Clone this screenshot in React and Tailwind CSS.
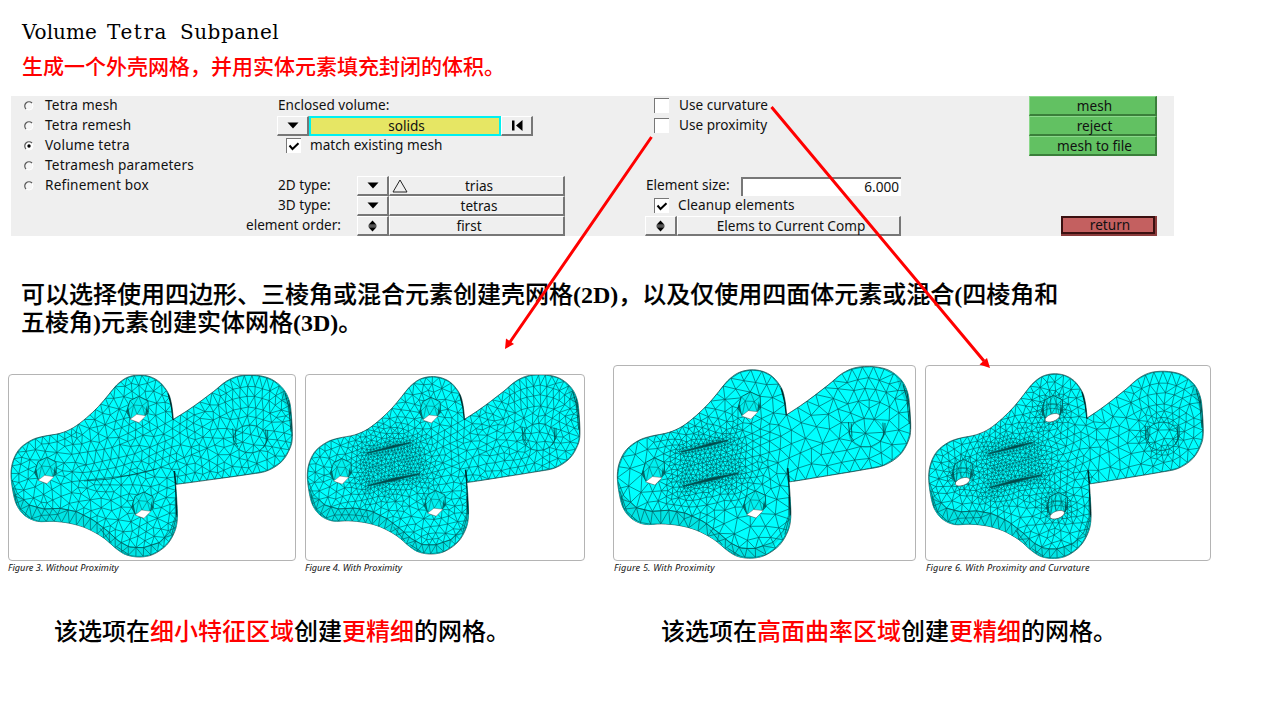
import React from "react";

/* ---------- mesh generation ---------- */

const OUTLINE = [
  [520,163],[515,120],[505,85],[480,52],[450,35],[415,30],[380,38],[350,60],[325,90],[295,125],[260,158],[220,188],[180,205],
  [130,214],[95,225],[60,250],[40,285],[33,325],[38,375],[50,420],[75,452],[112,469],[160,469],[210,475],[260,490],[310,518],
  [350,552],[380,570],[420,576],[460,568],[500,540],[524,500],[532,460],[530,400],[527,358],[560,354],[640,343],[740,329],
  [800,318],[845,290],[870,250],[877,215],[874,150],[868,108],[850,72],[815,43],[770,31],[720,32],[680,48],[640,80],[600,110],[560,138],
];
const EDGE = [[36,345],[52,385],[88,420],[130,432],[180,430],[230,440],[280,465],[325,500],[355,528],[390,547],[430,548],[480,532],[510,500],[526,455],[526,400]];
const CAPS = [
  [[655,72],[662,95],[700,72],[755,62],[810,78],[850,110],[873,155]],
  [[655,120],[705,100],[755,92],[805,105],[848,138],[874,180]],
  [[640,165],[700,135],[750,125],[800,138],[850,172],[872,205]],
];
const RIDGES = [
  [[215,268],[330,250],[420,215],[520,163]],
  [[235,305],[400,268],[520,218],[600,160],[655,85]],
  [[215,350],[400,330],[470,312],[560,275],[650,238]],
];
const SLOTS = [[[218,261],[352,233]],[[222,361],[375,329]]];
const HOLES = [[413,160],[137,343],[428,447]];
const HEX = [[-33,-20],[-23,-53],[3,-66],[31,-52],[32,-18],[22,-8],[2,11],[-21,2]];

const dist = (a, b) => Math.hypot(a[0] - b[0], a[1] - b[1]);
function inside(p, poly) {
  let c = false;
  for (let i = 0, j = poly.length - 1; i < poly.length; j = i++) {
    const [xi, yi] = poly[i], [xj, yj] = poly[j];
    if (yi > p[1] !== yj > p[1] && p[0] < ((xj - xi) * (p[1] - yi)) / (yj - yi) + xi) c = !c;
  }
  return c;
}
function segDist(p, a, b) {
  const dx = b[0] - a[0], dy = b[1] - a[1];
  const t = Math.max(0, Math.min(1, ((p[0] - a[0]) * dx + (p[1] - a[1]) * dy) / (dx * dx + dy * dy)));
  return Math.hypot(p[0] - a[0] - t * dx, p[1] - a[1] - t * dy);
}
function sample(line, h, closed) {
  const out = [];
  const pts = closed ? [...line, line[0]] : line;
  let acc = 0;
  out.push(pts[0]);
  for (let i = 1; i < pts.length; i++) {
    const a = pts[i - 1], b = pts[i], L = dist(a, b);
    for (let s = 0; s < L; s += 1) {
      acc += 1;
      const p = [a[0] + ((b[0] - a[0]) * s) / L, a[1] + ((b[1] - a[1]) * s) / L];
      if (acc >= h(p)) { out.push(p); acc = 0; }
    }
  }
  return out;
}
function delaunay(pts) {
  const n = pts.length;
  const P = [...pts, [-5000, -5000], [6000, -5000], [450, 8000]];
  const circ = (a, b, c) => {
    const [ax, ay] = P[a], [bx, by] = P[b], [cx, cy] = P[c];
    const d = 2 * (ax * (by - cy) + bx * (cy - ay) + cx * (ay - by)) || 1e-9;
    const A = ax * ax + ay * ay, B = bx * bx + by * by, C = cx * cx + cy * cy;
    const x = (A * (by - cy) + B * (cy - ay) + C * (ay - by)) / d;
    const y = (A * (cx - bx) + B * (ax - cx) + C * (bx - ax)) / d;
    return { a, b, c, x, y, r: (ax - x) ** 2 + (ay - y) ** 2 };
  };
  const order = pts.map((_, i) => i).sort((i, j) => pts[i][0] - pts[j][0]);
  let open = [circ(n, n + 1, n + 2)];
  const done = [];
  for (const i of order) {
    const [x, y] = P[i];
    const edges = new Map();
    const keep = [];
    for (const t of open) {
      const dx = x - t.x;
      if (dx > 0 && dx * dx > t.r) { done.push(t); continue; }
      if (dx * dx + (y - t.y) ** 2 < t.r) {
        for (const [u, v] of [[t.a, t.b], [t.b, t.c], [t.c, t.a]]) {
          const k = Math.min(u, v) * 10000 + Math.max(u, v);
          if (edges.has(k)) edges.set(k, null); else edges.set(k, [u, v]);
        }
      } else keep.push(t);
    }
    for (const e of edges.values()) if (e) keep.push(circ(e[0], e[1], i));
    open = keep;
  }
  return [...done, ...open].filter((t) => t.a < n && t.b < n && t.c < n);
}
function buildMesh({ size, armSize, fine, fineHoles, seed }) {
  let s = seed;
  const rnd = () => ((s = (s * 16807) % 2147483647) / 2147483647);
  const zone = [[225, 258], [350, 232], [372, 330], [228, 358]];
  const h = (p) => {
    let v = p[0] > 540 ? armSize : size;
    if (fine) {
      const ds = Math.min(...SLOTS.map((q) => segDist(p, q[0], q[1])));
      let dz = 0;
      if (!inside(p, zone)) dz = Math.min(...zone.map((a, i) => segDist(p, a, zone[(i + 1) % 4])));
      v = Math.min(v, fine + Math.max(0, dz - 12) * 0.17, 6 + ds * 0.3);
    }
    if (fineHoles) {
      for (const c of HOLES) v = Math.min(v, 9 + Math.max(0, dist(p, [c[0], c[1] - 25]) - 32) * 0.35);
      v = Math.min(v, 14 + Math.abs(dist(p, [750, 218]) - 50) * 0.3);
    }
    return v;
  };
  const holes = HOLES.map(([x, y]) => HEX.map(([a, b]) => [x + a, y + b]));
  const pts = [];
  const cell = 40, grid = new Map();
  const put = (p, k) => {
    const r = h(p) * k, gx = Math.floor(p[0] / cell), gy = Math.floor(p[1] / cell);
    for (let i = -1; i <= 1; i++) for (let j = -1; j <= 1; j++)
      for (const q of grid.get((gx + i) * 1000 + gy + j) || []) if (dist(p, q) < r) return;
    const key = gx * 1000 + gy;
    if (!grid.has(key)) grid.set(key, []);
    grid.get(key).push(p);
    pts.push(p);
  };
  sample(OUTLINE, (p) => h(p) * 0.9, true).forEach((p) => put(p, 0.6));
  holes.forEach((o) => sample(o, () => (fineHoles ? 9 : size * 0.9), true).forEach((p) => put(p, 0.45)));
  const thin = (p) => Math.min(h(p), 24);
  sample(EDGE, thin, false).forEach((p) => put(p, 0.6));
  CAPS.forEach((l) => sample(l, (p) => h(p) * 0.9, false).forEach((p) => put(p, 0.7)));
  const ring = Array.from({ length: 28 }, (_, i) => [750 + 51 * Math.cos(i * 0.2244), 222 + 42 * Math.sin(i * 0.2244)]);
  sample(ring, (p) => h(p) * 0.9, true).forEach((p) => put(p, 0.65));
  RIDGES.forEach((l) => sample(l, h, false).forEach((p) => put(p, 0.8)));
  if (fine) SLOTS.forEach((l) => sample(l, () => 6, false).forEach((p) => put(p, 0.6)));
  const fixed = pts.length;
  for (let i = 0; i < 70000; i++) {
    const p = [30 + rnd() * 850, 28 + rnd() * 550];
    if (!inside(p, OUTLINE) || holes.some((o) => inside(p, o))) continue;
    put(p, 0.83);
  }
  let tris = delaunay(pts);
  for (let it = 0; it < 6; it++) {
    const acc = pts.map(() => [0, 0, 0]);
    for (const t of tris) for (const [u, v] of [[t.a, t.b], [t.b, t.c], [t.c, t.a]]) {
      acc[u][0] += pts[v][0]; acc[u][1] += pts[v][1]; acc[u][2]++;
      acc[v][0] += pts[u][0]; acc[v][1] += pts[u][1]; acc[v][2]++;
    }
    for (let i = fixed; i < pts.length; i++) if (acc[i][2]) pts[i] = [acc[i][0] / acc[i][2], acc[i][1] / acc[i][2]];
    tris = delaunay(pts);
  }
  const seen = new Set();
  let d = "";
  for (const t of tris) {
    const c = [(pts[t.a][0] + pts[t.b][0] + pts[t.c][0]) / 3, (pts[t.a][1] + pts[t.b][1] + pts[t.c][1]) / 3];
    if (!inside(c, OUTLINE) || holes.some((o) => inside(c, o))) continue;
    for (const [u, v] of [[t.a, t.b], [t.b, t.c], [t.c, t.a]]) {
      const k = Math.min(u, v) * 10000 + Math.max(u, v);
      if (seen.has(k)) continue;
      seen.add(k);
      d += `M${pts[u][0].toFixed(1)} ${pts[u][1].toFixed(1)}L${pts[v][0].toFixed(1)} ${pts[v][1].toFixed(1)}`;
    }
  }
  return d;
}

const line = (pts) => "M" + pts.map((p) => p.join(" ")).join("L");
const SHARP = [0, 34];
function smooth(pts) {
  const n = pts.length;
  let d = `M${pts[0].join(" ")}`;
  for (let i = 0; i < n; i++) {
    const a = pts[(i - 1 + n) % n], b = pts[i], c = pts[(i + 1) % n], e = pts[(i + 2) % n];
    const c1 = SHARP.includes(i) ? b : [b[0] + (c[0] - a[0]) / 6, b[1] + (c[1] - a[1]) / 6];
    const c2 = SHARP.includes((i + 1) % n) ? c : [c[0] - (e[0] - b[0]) / 6, c[1] - (e[1] - b[1]) / 6];
    d += `C${c1.join(" ")} ${c2.join(" ")} ${c.join(" ")}`;
  }
  return d + "Z";
}
const OUT_D = smooth(OUTLINE);

function Hole({ x, y, round }) {
  return (
    <g transform={`translate(${x} ${y})`} strokeLinejoin="round">
      <path d="M-33-20L-23-53L3-66L31-52L32-18L22-8L2 11L-21 2Z" fill="#00f0f0" stroke="#004a4a" strokeWidth="2.2" />
      <path d="M-33-20L-12-40L3-66M-23-53L-12-40L14-38L31-52M3-66L14-38L32-18M-12-40L-21 2M-12-40L-2-12L14-38L22-8" fill="none" stroke="#005a5a" strokeWidth="1.5" />
      <path d="M-33-22L-21 2L-28-32ZM32-20L22-8L27-38Z" fill="#004a4a" opacity="0.8" />
      {round ? (
        <>
          <path d="M-30-6L-25-48M-20 0L-16-56M-5-12L-5-62M12-13L12-60M25-8L26-50M-30-34Q0-50 30-34M-30-20Q0-36 30-20" fill="none" stroke="#004a4a" strokeWidth="1.5" />
          <ellipse cx="0" cy="0" rx="23" ry="11" transform="rotate(-17)" fill="#fff" stroke="#333" strokeWidth="1.5" />
        </>
      ) : (
        <path d="M-23 3L-3-12L25-8L4 13Z" fill="#fff" stroke="#444" strokeWidth="1.2" />
      )}
    </g>
  );
}

function Bracket({ id, viewBox, matrix, options }) {
  const d = React.useMemo(() => buildMesh(options), [options]);
  return (
    <svg viewBox={viewBox} className="block h-full w-full" preserveAspectRatio="none">
      <clipPath id={id}><path d={OUT_D} /></clipPath>
      <g transform={matrix}>
        <path d={OUT_D} fill="#00ffff" stroke="#3c5a5a" strokeWidth="2.5" strokeLinejoin="round" />
        <g clipPath={`url(#${id})`} fill="none">
          <path d="M33 335L52 385L88 420L130 432L180 430L230 440L280 465L325 500L355 528L390 547L430 548L480 532L510 500L527 455L527 350L545 480L430 590L330 560L250 500L100 480L30 430Z" fill="#00e4e4" />
          <path d="M850 110L873 155L885 190L885 60L830 50Z" fill="#00d8d8" />
          <path d={d} stroke="#00585c" strokeWidth="1.9" />
          <path d={line(EDGE)} stroke="#005c5c" strokeWidth="2" />
          <ellipse cx="750" cy="222" rx="51" ry="42" stroke="#006a6a" strokeWidth="1.2" />
          <path d="M698 190L701 225L714 246M706 194L708 232M803 195L803 225L790 248M797 194L799 232" stroke="#005252" strokeWidth="2.5" />
          <path d="M505 85L515 125L520 165M523 318L527 358L531 455" stroke="#002c2c" strokeWidth="5" />
          <path d="M855 85L866 125L873 200M866 105L873 155L877 215" stroke="#004040" strokeWidth="2.5" />
          <path d="M40 370L60 430L90 458M44 385L50 420M350 545L385 568M300 490L335 535M515 510L530 450" stroke="#006a6a" strokeWidth="2.5" />
          {options.fine ? (
            <path d="M218 262L300 246L352 232L300 240ZM222 362L300 348L382 328L300 341Z" fill="#004848" stroke="#005454" strokeWidth="2.5" />
          ) : (
            <path d="M252 348L330 342L400 328L470 312" stroke="#003c3c" strokeWidth="2" />
          )}
        </g>
        {HOLES.map(([x, y]) => <Hole key={x} x={x} y={y} round={options.fineHoles} />)}
      </g>
    </svg>
  );
}

const FIGURES = [
  { id: "f3", caption: "Figure 3. Without Proximity", offset: "", box: "w-[288px] h-[187px]", cap: "tracking-[0px]", viewBox: "27 30 858 555", matrix: "matrix(1 0 0 1 0 0)", options: { size: 25, armSize: 25, seed: 11 } },
  { id: "f4", caption: "Figure 4. With Proximity", offset: "ml-[9px]", box: "w-[280px] h-[187px]", cap: "tracking-[0px]", viewBox: "18 30 834 555", matrix: "matrix(0.969 -0.018 0 0.975 -10 13)", options: { size: 23, armSize: 23, fine: 10, seed: 23 } },
  { id: "f5", caption: "Figure 5. With Proximity", offset: "ml-[28px]", box: "w-[303px] h-[196px]", cap: "pl-px tracking-[0.15px]", viewBox: "27 18 903 582", matrix: "matrix(1.0427 -0.03 0 1.035 2.6 11)", options: { size: 35, armSize: 35, fine: 11, seed: 37 } },
  { id: "f6", caption: "Figure 6. With Proximity and Curvature", offset: "ml-[9px]", box: "w-[286px] h-[196px]", cap: "pl-px tracking-[0.15px]", viewBox: "33 18 852 582", matrix: "matrix(0.976 -0.022 0 1.015 8.8 20)", options: { size: 25, armSize: 31, fine: 10, fineHoles: true, seed: 51 } },
];

/* ---------- panel widgets ---------- */

const bevel = "border-t border-l border-t-white border-l-white border-r-2 border-b-2 border-r-[#777] border-b-[#777]";

function Radio({ label, on }) {
  return (
    <div className="flex h-5 items-center pb-[2px]">
      <svg width="10" height="10" viewBox="0 0 10 10" className="mt-px mr-[11px]">
        <circle cx="5" cy="5" r="4" fill={on ? "#fff" : "#f6f6f6"} stroke="#fff" />
        <path d="M2 8A4 4 0 0 1 8 2" fill="none" stroke="#555" strokeWidth="1.2" />
        {on && <circle cx="5" cy="5" r="1.7" fill="#000" />}
      </svg>
      {label}
    </div>
  );
}
function Check({ on }) {
  return (
    <span className="block h-[15px] w-[15px] shrink-0 border-t border-l border-[#777] bg-white">
      {on && (
        <svg viewBox="0 0 14 14" className="block h-[14px] w-[14px]"><path d="M2.5 6.5L5.5 10L11.5 4.2" fill="none" stroke="#000" strokeWidth="2" /></svg>
      )}
    </span>
  );
}
function Drop({ updown }) {
  return (
    <span className={`flex h-5 w-8 shrink-0 items-center justify-center ${bevel}`}>
      {updown ? (
        <svg width="9" height="12" viewBox="0 0 9 12"><path d="M4.5 0.5L8.5 4.7H0.5ZM4.5 11.5L8.5 7.3H0.5Z" fill="#000" /><path d="M0.5 6H8.5" stroke="#555" strokeWidth="2" /></svg>
      ) : (
        <svg width="12" height="7" viewBox="0 0 12 7"><path d="M0.5 0.5H11.5L6 6.5Z" fill="#000" /></svg>
      )}
    </span>
  );
}
function TypeRow({ label, value, updown, tri }) {
  return (
    <div className="flex h-5 items-center">
      <span className={updown ? "w-[112px] pb-[2px] pl-px" : "w-[112px] pb-[2px] pl-[33px]"}>{label}</span>
      <Drop updown={updown} />
      <span className={`flex h-5 w-[176px] items-center ${bevel}`}>
        <span className="w-6 pl-[2px]">
          {tri && <svg width="16" height="14" viewBox="0 0 16 14"><path d="M8 1L15 13H1Z" fill="none" stroke="#222" /></svg>}
        </span>
        <span className={updown ? "flex-1 pr-[39px] text-center" : "flex-1 pr-[19px] text-center"}>{value}</span>
      </span>
    </div>
  );
}
function Green({ children }) {
  return <div className="flex h-5 items-center justify-center border-t border-l border-r-2 border-b-2 border-[#8ad88a] border-r-[#3a7f3a] border-b-[#3a7f3a] bg-[#62c162] pl-[4px]">{children}</div>;
}

const cjk = "font-['Liberation_Serif','Noto_Sans_CJK_SC',sans-serif]";

export default function App() {
  return (
    <div className="relative h-[720px] w-[1280px] overflow-hidden bg-white text-black">
      <h1 className="flex h-[50px] items-end pl-[22px] font-['DejaVu_Serif',serif] text-[20px] leading-[36px] whitespace-pre">
        <span className="w-[85px]">Volume</span>
        <span className="w-[73px] tracking-[1.6px]">Tetra</span>
        <span className="tracking-[0.5px]">Subpanel</span>
      </h1>
      <p className={`flex h-[46px] items-start pl-[22px] text-[21px] leading-[34px] font-medium text-[#ff0000] ${cjk}`}>
        生成一个外壳网格，并用实体元素填充封闭的体积。
      </p>

      <section className="ml-[11px] flex h-[140px] w-[1163px] bg-[#efefef] font-['Noto_Sans',sans-serif] text-[13.6px] leading-[18px] whitespace-nowrap text-[#111]">
        <div className="w-[234px] pl-[13px] tracking-[0.2px]">
          <Radio label="Tetra mesh" />
          <Radio label="Tetra remesh" />
          <Radio label="Volume tetra" on />
          <Radio label="Tetramesh parameters" />
          <Radio label="Refinement box" />
        </div>
        <div className="w-[400px]">
          <div className="h-5 pl-[33px]">Enclosed volume:</div>
          <div className="flex h-5 pl-8">
            <Drop />
            <span className="flex h-5 w-[192px] items-center justify-center border-2 border-[#00f0f0] bg-[#e6e664] pb-px pl-[3px]">solids</span>
            <span className={`flex h-5 w-8 items-center justify-center ${bevel}`}>
              <svg width="12" height="11" viewBox="0 0 12 11"><path d="M1 0.5H3.5V10.5H1ZM11.5 0V11L5 5.5Z" fill="#000" /></svg>
            </span>
          </div>
          <div className="flex h-5 items-center pb-[2px] pl-[41px]"><Check on /><span className="pl-[9px]">match existing mesh</span></div>
          <div className="h-5" />
          <TypeRow label="2D type:" value="trias" tri />
          <TypeRow label="3D type:" value="tetras" />
          <TypeRow label="element order:" value="first" updown />
        </div>
        <div className="w-[373px]">
          <div className="flex h-5 items-center pb-[2px] pl-[9px]"><Check /><span className="pl-[10px]">Use curvature</span></div>
          <div className="flex h-5 items-center pb-[2px] pl-[9px]"><Check /><span className="pl-[10px]">Use proximity</span></div>
          <div className="h-10" />
          <div className="flex h-5 items-center">
            <span className="w-24 pb-[2px] pl-px">Element size:</span>
            <span className="h-[19px] w-[160px] border-t-2 border-l-2 border-[#777] bg-white pr-[2px] text-right leading-[15px]">6.000</span>
          </div>
          <div className="flex h-5 items-center pb-[2px] pl-[9px]"><Check on /><span className="pl-[9px] tracking-[0.1px]">Cleanup elements</span></div>
          <div className="flex h-5">
            <Drop updown />
            <span className={`flex h-5 w-[224px] items-center justify-center pl-[5px] ${bevel}`}>Elems to Current Comp</span>
          </div>
        </div>
        <div className="ml-[11px] w-[128px]">
          <Green>mesh</Green>
          <Green>reject</Green>
          <Green>mesh to file</Green>
          <div className="h-[60px]" />
          <div className="ml-8 h-5 border-r-2 border-b-2 border-[#8a3a3a] bg-[#c46060]">
            <div className="flex h-[18px] items-center justify-center border-2 border-[#3a1010] pl-[4px]">return</div>
          </div>
        </div>
      </section>

      <p className={`mt-[45px] h-[84px] pl-[21px] text-[24px] leading-[28px] font-medium whitespace-nowrap [-webkit-text-stroke:0.15px_#000] ${cjk}`}>
        可以选择使用四边形、三棱角或混合元素创建壳网格<b className="font-bold [-webkit-text-stroke:0]">(2D)</b>，以及仅使用四面体元素或混合<b className="font-bold [-webkit-text-stroke:0]">(</b>四棱角和<br />
        五棱角<b className="font-bold [-webkit-text-stroke:0]">)</b>元素创建实体网格<b className="font-bold [-webkit-text-stroke:0]">(3D)</b>。
      </p>

      <div className="flex h-[210px] items-end pl-2">
        {FIGURES.map((f) => (
          <figure key={f.id} className={`flex flex-col ${f.offset}`}>
            <div className={`${f.box} overflow-hidden rounded-[4px] border border-[#b4b4b4] bg-white`}>
              <Bracket id={f.id} viewBox={f.viewBox} matrix={f.matrix} options={f.options} />
            </div>
            <figcaption className={`h-[14px] font-['Noto_Sans',sans-serif] text-[9.2px] leading-[14px] whitespace-nowrap text-[#111] italic ${f.cap}`}>{f.caption}</figcaption>
          </figure>
        ))}
      </div>

      <div className={`mt-[41px] flex text-[24px] leading-[32px] font-medium ${cjk}`}>
        <p className="w-[607px] pl-[54px]">该选项在<span className="text-[#ff0000]">细小特征区域</span>创建<span className="text-[#ff0000]">更精细</span>的网格。</p>
        <p className="pl-[54px]">该选项在<span className="text-[#ff0000]">高面曲率区域</span>创建<span className="text-[#ff0000]">更精细</span>的网格。</p>
      </div>

      <svg className="pointer-events-none absolute inset-0" width="1280" height="720" viewBox="0 0 1280 720">
        <path d="M651.5 137L510 342M771.5 107L984 361" stroke="#ff0000" strokeWidth="3" />
        <path d="M505 349L506 338.5L514 344ZM990 368L979.5 364.5L987 358Z" fill="#ff0000" />
      </svg>
    </div>
  );
}
